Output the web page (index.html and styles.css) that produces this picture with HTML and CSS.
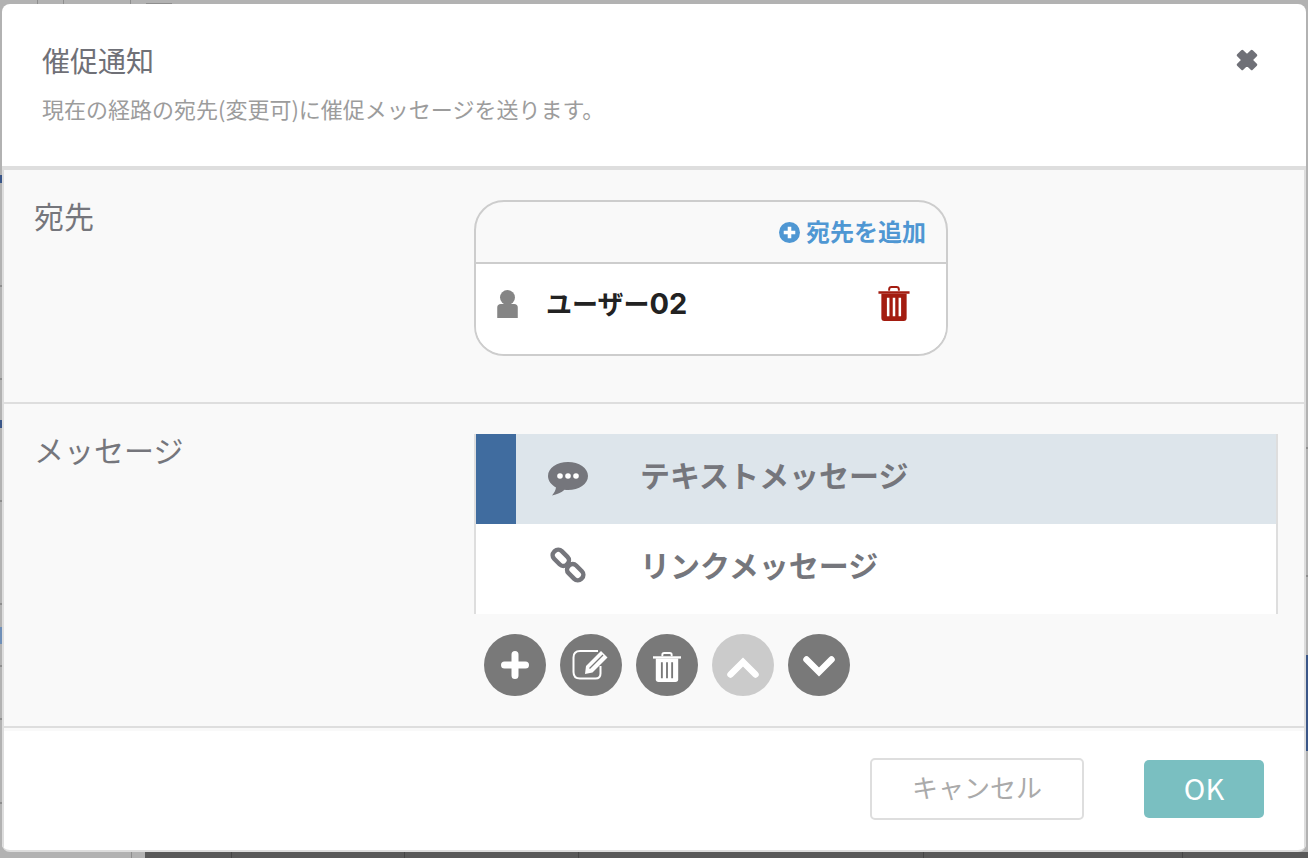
FILE: index.html
```html
<!DOCTYPE html>
<html lang="ja">
<head>
<meta charset="utf-8">
<title>催促通知</title>
<link rel="stylesheet" href="styles.css">
</head>
<body>
<div class="backdrop"></div>
<div class="modal">
  <header class="modal-head">
    <div class="head-text">
      <h1 class="title">催促通知</h1>
      <p class="subtitle">現在の経路の宛先(変更可)に催促メッセージを送ります。</p>
    </div>
    <svg class="close" viewBox="0 0 22 22"><path d="M3.500 7 7 3.500 11 7.500 15 3.500 18.500 7 14.500 11 18.500 15 15 18.500 11 14.500 7 18.500 3.500 15 7.500 11Z" fill="#6f7077" stroke="#6f7077" stroke-width="2.400" stroke-linejoin="round"/></svg>
  </header>
  <main class="modal-body">
    <section class="row row-dest">
      <div class="label">宛先</div>
      <div class="field">
        <div class="dest-card">
          <div class="dest-top">
            <svg class="add-icon" viewBox="0 0 20 20"><circle cx="10" cy="10" r="10" fill="#4f97d3"/><path d="M10 4.500v11M4.500 10h11" stroke="#fff" stroke-width="3.400"/></svg>
            <span class="add-text">宛先を追加</span>
          </div>
          <div class="dest-user">
            <svg class="user-icon" viewBox="0 0 22 30"><circle cx="11" cy="8" r="8" fill="#858585"/><path d="M0 30V19q0-4 4-4h14q4 0 4 4v11Z" fill="#858585"/></svg>
            <span class="user-name">ユーザー<span class="user-num">02</span></span>
            <svg class="user-trash" viewBox="0 0 32 36"><path d="M11 5V3.500Q11 1 13.500 1h5Q21 1 21 3.500V5" fill="none" stroke="#a31c10" stroke-width="2"/><path d="M0 5.500h32V8H0Z" fill="#a31c10"/><path d="M3 8h26v25q0 3-3 3H6q-3 0-3-3Z" fill="#a31c10"/><path d="M10 12v19M16 12v19M22 12v19" stroke="#fff" stroke-width="2.600"/></svg>
          </div>
        </div>
      </div>
    </section>
    <section class="row row-msg">
      <div class="label">メッセージ</div>
      <div class="field">
        <ul class="msg-list">
          <li class="msg-item is-active">
            <svg class="msg-icon" viewBox="0 0 40 36"><path d="M20 1C9 1 0 7 0 15c0 5 3.500 9 8 11.500-.5 3-1.800 5.500-4 8 5-.8 9.500-3 12.500-5.700 1 .1 2.300.2 3.500.2 11 0 20-6 20-14S31 1 20 1Z" fill="#75767c"/><circle cx="12" cy="15" r="2.800" fill="#fff"/><circle cx="20" cy="15" r="2.800" fill="#fff"/><circle cx="28" cy="15" r="2.800" fill="#fff"/></svg>
            <span class="msg-text">テキストメッセージ</span>
          </li>
          <li class="msg-item">
            <svg class="msg-icon msg-icon-link" viewBox="0 0 40 40"><g fill="none" stroke="#75767c" stroke-width="5"><rect x="2" y="6" width="20" height="12" rx="5.500" transform="rotate(45 12 12)"/><rect x="18" y="22" width="20" height="12" rx="5.500" transform="rotate(45 28 28)"/></g></svg>
            <span class="msg-text">リンクメッセージ</span>
          </li>
        </ul>
        <div class="tools">
          <button class="tool" type="button"><svg viewBox="0 0 32 32"><path d="M16 5.500v21M5.500 16h21" stroke="#fff" stroke-width="7" stroke-linecap="round"/></svg></button>
          <button class="tool" type="button"><svg class="icon-edit" viewBox="0 0 38 32"><path d="M26 2H8Q1.500 2 1.500 8.500V23Q1.500 29.500 8 29.500h15.500q5 0 5-5V17" fill="none" stroke="#fff" stroke-width="2"/><path d="M14 17 29 2l6.500 6.500-15 15-7.500 1.500Z" fill="#fff"/><path d="M17.500 19.500 31 6" stroke="#797979" stroke-width="1.200"/></svg></button>
          <button class="tool" type="button"><svg class="icon-trash" viewBox="0 0 30 32"><path d="M10 4.500V3q0-2 2-2h6q2 0 2 2v1.500" fill="none" stroke="#fff" stroke-width="2"/><path d="M0 4.500h30V7H0Z" fill="#fff"/><path d="M3 7h24v22q0 3-3 3H6q-3 0-3-3Z" fill="#fff"/><path d="M9.500 11v17M15 11v17M20.500 11v17" stroke="#797979" stroke-width="2"/></svg></button>
          <button class="tool is-disabled" type="button"><svg class="icon-arrow" viewBox="0 0 32 22"><path d="M3.500 18.500 16 6l12.500 12.500" fill="none" stroke="#fff" stroke-width="6.500" stroke-linecap="round"/></svg></button>
          <button class="tool" type="button"><svg class="icon-arrow" viewBox="0 0 32 22"><path d="M3.500 3.500 16 16 28.500 3.500" fill="none" stroke="#fff" stroke-width="6.500" stroke-linecap="round"/></svg></button>
        </div>
      </div>
    </section>
  </main>
  <footer class="modal-foot">
    <button class="btn btn-cancel" type="button">キャンセル</button>
    <button class="btn btn-ok" type="button">OK</button>
  </footer>
</div>
</body>
</html>
```

FILE: styles.css
```css
* { box-sizing: border-box; }
html, body { height: 100%; }
body {
  margin: 0;
  background: #b2b2b2;
  overflow: hidden;
  padding: 4px 2px 6px 2px;
  font-family: "Noto Sans CJK JP", "Noto Sans", sans-serif;
}
/* Dimmed page behind the dialog: only its slivers around the edges are visible. */
.backdrop {
  position: absolute;
  inset: 0;
  background:
    /* top ticks */
    linear-gradient(#8e8e8e, #8e8e8e) 37px 0 / 1px 4px no-repeat,
    linear-gradient(#8e8e8e, #8e8e8e) 63px 0 / 1px 4px no-repeat,
    linear-gradient(#8e8e8e, #8e8e8e) 130px 0 / 1px 4px no-repeat,
    linear-gradient(#8e8e8e, #8e8e8e) 146px 3px / 26px 1px no-repeat,
    /* left edge */
    linear-gradient(#3a5688, #3a5688) 0 175px / 2px 8px no-repeat,
    linear-gradient(#3a5688, #3a5688) 0 420px / 2px 8px no-repeat,
    linear-gradient(#6f8fb8, #6f8fb8) 0 627px / 2px 17px no-repeat,
    linear-gradient(#8e8e8e, #8e8e8e) 0 285px / 2px 2px no-repeat,
    linear-gradient(#8e8e8e, #8e8e8e) 0 378px / 2px 2px no-repeat,
    linear-gradient(#8e8e8e, #8e8e8e) 0 500px / 2px 2px no-repeat,
    linear-gradient(#8e8e8e, #8e8e8e) 0 603px / 2px 2px no-repeat,
    linear-gradient(#8e8e8e, #8e8e8e) 0 665px / 2px 2px no-repeat,
    linear-gradient(#8e8e8e, #8e8e8e) 0 718px / 2px 2px no-repeat,
    linear-gradient(#8e8e8e, #8e8e8e) 0 802px / 2px 2px no-repeat,
    /* right edge */
    linear-gradient(#3a5688, #3a5688) 1306px 655px / 2px 96px no-repeat,
    linear-gradient(#8e8e8e, #8e8e8e) 1306px 447px / 2px 2px no-repeat,
    linear-gradient(#8e8e8e, #8e8e8e) 1306px 575px / 2px 2px no-repeat,
    /* bottom dark bar ticks */
    linear-gradient(#454545, #454545) 231px 852px / 1px 6px no-repeat,
    linear-gradient(#454545, #454545) 404px 852px / 1px 6px no-repeat,
    linear-gradient(#454545, #454545) 578px 852px / 1px 6px no-repeat,
    linear-gradient(#454545, #454545) 923px 852px / 1px 6px no-repeat,
    linear-gradient(#454545, #454545) 1182px 852px / 1px 6px no-repeat,
    linear-gradient(#595959, #595959) 145px 852px / 1163px 6px no-repeat,
    linear-gradient(#8e8e8e, #8e8e8e) 131px 852px / 1px 6px no-repeat;
}
.modal {
  position: relative;
  height: 848px;
  display: flex;
  flex-direction: column;
  background: #fff;
  border-radius: 8px;
  border-bottom: 2px solid #ddd;
  overflow: hidden;
}
.modal-head {
  height: 166px;
  flex: none;
  display: flex;
  justify-content: space-between;
  align-items: flex-start;
  padding: 38px 46px 0 40px;
  border-bottom: 4px solid #dedede;
}
.title {
  margin: 0;
  font-size: 28px;
  line-height: 36px;
  font-weight: 400;
  color: #6f7077;
}
.subtitle {
  margin: 16px 0 0;
  font-size: 22px;
  line-height: 28px;
  font-weight: 400;
  color: #9c9c9c;
}
.close { width: 26px; height: 26px; margin-top: 5px; }
.modal-body {
  flex: none;
  height: 561px;
  background: #f9f9f9;
  border-left: 2px solid #ddd;
  border-right: 2px solid #ddd;
  display: flex;
  flex-direction: column;
}
.row { display: flex; }
.row-dest { height: 234px; border-bottom: 2px solid #dedede; padding-top: 30px; }
.row-msg { height: 324px; border-bottom: 2px solid #dedede; padding-top: 30px; }
.label {
  width: 470px;
  flex: none;
  margin-top: -3px;
  padding-left: 30px;
  font-size: 30px;
  line-height: 36px;
  color: #75767c;
}
.field { flex: none; width: 804px; }
.dest-card {
  width: 474px;
  height: 156px;
  border: 2px solid #cdcdcd;
  border-radius: 30px;
  overflow: hidden;
  display: flex;
  flex-direction: column;
}
.dest-top {
  height: 62px;
  flex: none;
  border-bottom: 2px solid #cdcdcd;
  display: flex;
  align-items: center;
  justify-content: flex-end;
  padding-right: 20px;
  gap: 6px;
}
.add-icon { width: 21px; height: 21px; }
.add-text { font-size: 24px; font-weight: 700; color: #4f97d3; line-height: 30px; margin-top: -2px; }
.dest-user {
  flex: 1;
  background: #fff;
  display: flex;
  align-items: flex-start;
  padding: 26px 36px 0 21px;
}
.user-icon { width: 21px; height: 28px; }
.user-name {
  flex: 1;
  margin-left: 28px;
  font-size: 26px;
  line-height: 30px;
  font-weight: 700;
  color: #222;
  margin-top: -2px;
}
.user-num { font-family: Inter, sans-serif; font-size: 29px; }
.user-trash { width: 32px; height: 35px; margin-top: -4px; }
.msg-list {
  list-style: none;
  margin: 0;
  padding: 0;
  height: 180px;
  background: #fff;
  border-left: 2px solid #dedede;
  border-right: 2px solid #dedede;
}
.msg-item {
  height: 90px;
  display: flex;
  align-items: center;
  padding-left: 72px;
}
.msg-item.is-active {
  background: #dde5eb;
  border-left: 40px solid #406c9f;
  padding-left: 32px;
}
.msg-icon { width: 40px; height: 36px; flex: none; }
.msg-icon-link { margin-top: -8px; }
.msg-text {
  margin-left: 52px;
  font-size: 30px;
  line-height: 36px;
  font-weight: 700;
  color: #75767c;
  margin-top: -10px;
}
.tools { display: flex; gap: 14px; padding: 20px 0 0 10px; }
.tool {
  width: 62px;
  height: 62px;
  border-radius: 50%;
  border: 0;
  padding: 0;
  background: #797979;
  display: flex;
  align-items: center;
  justify-content: center;
}
.tool svg { width: 32px; height: 32px; }
.tool .icon-edit { width: 38px; height: 32px; }
.tool .icon-trash { width: 28px; height: 30px; margin-top: 4px; }
.tool .icon-arrow { margin-top: 4px; }
.tool.is-disabled { background: #cbcbcb; }
.modal-foot {
  flex: 1;
  display: flex;
  justify-content: flex-end;
  align-items: center;
  border-left: 2px solid #ddd;
  border-right: 2px solid #ddd;
  padding: 0 40px 4px 0;
  gap: 60px;
}
.btn {
  font-family: inherit;
  font-size: 26px;
  border-radius: 5px;
  padding: 0 0 4px;
}
.btn-cancel {
  width: 214px;
  height: 62px;
  background: #fff;
  border: 2px solid #dedede;
  color: #aaa;
}
.btn-ok {
  width: 120px;
  height: 58px;
  background: #7abfc1;
  border: 0;
  color: #fff;
  font-size: 29px;
}
```
